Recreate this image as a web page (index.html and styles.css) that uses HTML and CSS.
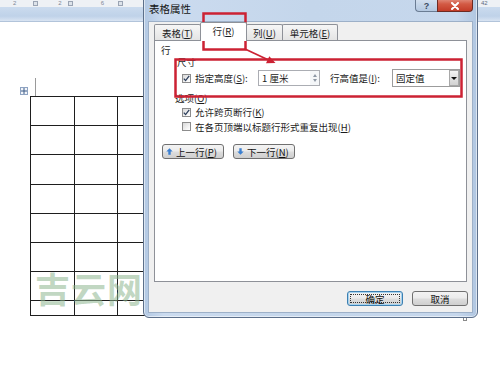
FILE: index.html
```html
<!DOCTYPE html>
<html lang="zh-CN">
<head>
<meta charset="utf-8">
<title>表格属性</title>
<link rel="stylesheet" href="styles.css">
</head>
<body>
<div class="screen">
  <div class="ruler">
    <div class="ruler-nums">
      <span class="rn n1">2</span><span class="rm m1"></span><span class="rn n2">2</span><span class="rm m2"></span><span class="rn n3">6</span><span class="rm m3"></span><span class="rn n4">42</span>
    </div>
    <div class="ruler-band"></div>
  </div>

  <div class="doc">
    <div class="table-wrap">
      <span class="margin-mark"></span>
      <span class="move-handle">
        <svg width="6" height="6" viewBox="0 0 6 6"><path d="M3 0V6M0 3H6" stroke="#3a5a86" stroke-width="1"/></svg>
      </span>
      <table class="grid">
        <tbody>
          <tr><td></td><td></td><td></td><td></td><td></td><td></td><td></td><td></td><td></td><td></td></tr>
          <tr><td></td><td></td><td></td><td></td><td></td><td></td><td></td><td></td><td></td><td></td></tr>
          <tr class="r30"><td></td><td></td><td></td><td></td><td></td><td></td><td></td><td></td><td></td><td></td></tr>
          <tr><td></td><td></td><td></td><td></td><td></td><td></td><td></td><td></td><td></td><td></td></tr>
          <tr><td></td><td></td><td></td><td></td><td></td><td></td><td></td><td></td><td></td><td></td></tr>
          <tr><td></td><td></td><td></td><td></td><td></td><td></td><td></td><td></td><td></td><td></td></tr>
          <tr><td></td><td></td><td></td><td></td><td></td><td></td><td></td><td></td><td></td><td></td></tr>
          <tr class="short"><td></td><td></td><td></td><td></td><td></td><td></td><td></td><td></td><td></td><td></td></tr>
        </tbody>
      </table>
      <span class="resize-handle"></span>
    </div>
  </div>

  <div class="watermark">吉云网</div>

  <div class="dialog">
    <div class="titlebar">
      <span class="title">表格属性</span>
      <div class="caption-btns">
        <span class="cap help">?</span>
        <span class="cap close">
          <svg width="10" height="8" viewBox="0 0 10 8"><path d="M2 1L8 7M8 1L2 7" stroke="#fff" stroke-width="2" stroke-linecap="round"/></svg>
        </span>
      </div>
    </div>
    <div class="dlg-body">
      <div class="tabs">
        <div class="tab t1">表格(<u>T</u>)</div>
        <div class="tab t2 active">行(<u>R</u>)</div>
        <div class="tab t3">列(<u>U</u>)</div>
        <div class="tab t4">单元格(<u>E</u>)</div>
      </div>
      <div class="panel">
        <div class="sec-title">行</div>
        <div class="grp-title">尺寸</div>
        <div class="size-row">
          <div class="chk-line">
            <span class="chk checked"><svg width="7" height="7" viewBox="0 0 7 7"><path d="M0.8 3.6L2.6 5.6L6.2 0.8" fill="none" stroke="#2c3e5c" stroke-width="1.3"/></svg></span>
            <span>指定高度(<u>S</u>):</span>
          </div>
          <div class="spin">
            <span class="val">1 厘米</span>
            <span class="spin-btns"><i class="up"></i><i class="down"></i></span>
          </div>
          <span class="lbl">行高值是(<u>I</u>):</span>
          <div class="combo">
            <span class="val">固定值</span>
            <span class="combo-btn"><i></i></span>
          </div>
        </div>
        <div class="opts-title">选项(<u>O</u>)</div>
        <div class="opt">
          <span class="chk checked"><svg width="7" height="7" viewBox="0 0 7 7"><path d="M0.8 3.6L2.6 5.6L6.2 0.8" fill="none" stroke="#2c3e5c" stroke-width="1.3"/></svg></span>
          <span>允许跨页断行(<u>K</u>)</span>
        </div>
        <div class="opt opt2">
          <span class="chk"></span>
          <span>在各页顶端以标题行形式重复出现(<u>H</u>)</span>
        </div>
        <div class="nav-btns">
          <button class="btn nbtn"><svg width="7" height="7" viewBox="0 0 7 7"><path d="M3.5 0.3L6.7 3.6H4.7V6.7H2.3V3.6H0.3Z" fill="#3b7fd0"/></svg><span>上一行(<u>P</u>)</span></button>
          <button class="btn nbtn"><svg width="7" height="7" viewBox="0 0 7 7"><path d="M3.5 6.7L6.7 3.4H4.7V0.3H2.3V3.4H0.3Z" fill="#3b7fd0"/></svg><span>下一行(<u>N</u>)</span></button>
        </div>
      </div>
      <div class="footer">
        <button class="btn fbtn default">确定</button>
        <button class="btn fbtn">取消</button>
      </div>
    </div>
  </div>

  <svg class="annot" width="500" height="371" viewBox="0 0 500 371">
    <rect x="203.5" y="13.5" width="42" height="36" fill="none" stroke="#cc2233" stroke-width="2.5"/>
    <path d="M245 49L268 59.7" stroke="#cc2233" stroke-width="1.8"/>
    <path d="M275.5 63L266 63.2L269.3 56.2Z" fill="#cc2233"/>
    <rect x="175.5" y="59.5" width="286" height="37" fill="none" stroke="#cc2233" stroke-width="2.5"/>
  </svg>
</div>
</body>
</html>
```

FILE: styles.css
```css
* {
  box-sizing: border-box;
  margin: 0;
  padding: 0;
}

html, body {
  width: 500px;
  height: 371px;
  overflow: hidden;
  background: #fff;
}

body {
  font-family: "Noto Sans CJK SC", "Liberation Sans", sans-serif;
  font-size: 9.5px;
  color: #1b1b1b;
}

u {
  text-decoration: underline;
  text-underline-offset: 1px;
}

.screen {
  position: relative;
  width: 500px;
  height: 371px;
  overflow: hidden;
}

/* ---------- ruler ---------- */
.ruler {
  height: 22px;
  display: flex;
  flex-direction: column;
}

.ruler-nums {
  height: 7px;
  background: #eef1f5;
  display: flex;
  align-items: center;
  font-family: "Liberation Sans", sans-serif;
  font-size: 6px;
  line-height: 7px;
  color: #7d8696;
}

.rn { display: block; }
.rm {
  display: block;
  width: 5px;
  height: 5px;
  border: 1px solid #9aa4b4;
  background: #dde3ea;
}
.n1 { margin-left: 13px; }
.m1 { margin-left: 17px; }
.n2 { margin-left: 20px; }
.m2 { margin-left: 6px; }
.n3 { margin-left: 28px; }
.m3 { margin-left: 14px; }
.n4 { margin-left: 358px; color: #5d6a80; }

.ruler-band {
  flex: 1;
  background: linear-gradient(#cbdbee, #bfd2e9 65%, #d9e4f2);
  border-bottom: 1px solid #b2c4da;
}

/* ---------- document ---------- */
.doc {
  padding: 74px 0 0 30px;
}

.table-wrap {
  position: relative;
  width: 436px;
}

.grid {
  border-collapse: collapse;
  table-layout: fixed;
  width: 436px;
}

.grid td {
  border: 1.5px solid #1e1e1e;
  height: 29px;
  padding: 0;
}

.grid tr.r30 td { height: 30px; }
.grid tr.short td { height: 15px; }

.move-handle {
  position: absolute;
  left: -10px;
  top: -9px;
  width: 8px;
  height: 8px;
  border: 1px solid #8ea3c2;
  background: #f2f5fa;
  display: flex;
  align-items: center;
  justify-content: center;
}

.margin-mark {
  position: absolute;
  left: 5px;
  top: -18px;
  width: 1px;
  height: 18px;
  background: #9a9a9a;
}

.resize-handle {
  position: absolute;
  right: -1px;
  bottom: -5px;
  width: 4px;
  height: 4px;
  border: 1px solid #8a8a8a;
  background: #fff;
}

.watermark {
  position: absolute;
  left: 35px;
  top: 266px;
  font-size: 35px;
  font-weight: 700;
  line-height: 44px;
  letter-spacing: 1px;
  color: rgba(140, 180, 142, 0.55);
}

/* ---------- dialog ---------- */
.dialog {
  position: absolute;
  left: 143px;
  top: -4px;
  width: 335px;
  height: 322px;
  border: 1px solid #5c6f8a;
  border-radius: 0 0 6px 6px;
  background: linear-gradient(90deg, #b2c8e3 0%, #cbdbef 6%, #c4d6eb 50%, #c6d7ec 94%, #b0c6e1 100%);
  padding: 0 5px 5px;
  display: flex;
  flex-direction: column;
  box-shadow: inset 0 0 0 1px rgba(255, 255, 255, 0.55);
}

.titlebar {
  height: 25px;
  display: flex;
  align-items: flex-start;
}

.title {
  margin-top: 5px;
  font-size: 10.5px;
  line-height: 14px;
  color: #141414;
}

.caption-btns {
  margin-left: auto;
  margin-right: -1px;
  display: flex;
}

.cap {
  height: 15px;
  display: flex;
  align-items: center;
  justify-content: center;
}

.help {
  width: 22px;
  border: 1px solid #6a7c93;
  border-top: none;
  border-right: none;
  border-radius: 0 0 0 4px;
  background: linear-gradient(#dbe5f1, #c6d6e9 50%, #b4c8e0);
  color: #3a4b60;
  font-family: "Liberation Sans", sans-serif;
  font-size: 9px;
  font-weight: 700;
  padding-top: 3px;
}

.close {
  width: 36px;
  border: 1px solid #6e2a22;
  border-top: none;
  border-radius: 0 0 4px 0;
  background: linear-gradient(#e8a395, #d35a44 50%, #c33c28);
  padding-top: 3px;
}

.dlg-body {
  flex: 1;
  background: #f0f0f0;
  padding: 2px 5px 0 5px;
  display: flex;
  flex-direction: column;
  box-shadow: 0 0 0 1px #9db0c8;
}

.tabs {
  height: 16px;
  display: flex;
  align-items: flex-end;
  position: relative;
  z-index: 1;
}

.tab {
  height: 16px;
  border: 1px solid #8e9198;
  border-bottom: none;
  border-radius: 2px 2px 0 0;
  background: linear-gradient(#f6f6f6, #e4e4e4);
  display: flex;
  align-items: center;
  justify-content: center;
  line-height: 14px;
  padding-top: 1px;
  white-space: nowrap;
}

.tab + .tab { margin-left: -1px; }

.t1 { width: 47px; }
.t2 { width: 47px; }
.t3 { width: 37px; }
.t4 { width: 56px; }

.tab.active {
  height: 19px;
  margin-bottom: -1px;
  background: #fff;
  padding-top: 0;
  padding-bottom: 3px;
}

.panel {
  height: 242px;
  border: 1px solid #8e9198;
  background: #fff;
  display: flex;
  flex-direction: column;
}

.sec-title {
  margin: 2px 0 0 6px;
  height: 14px;
  line-height: 14px;
}

.grp-title {
  margin-left: 22px;
  height: 10px;
  line-height: 10px;
}

.size-row {
  margin: 2px 0 0 27px;
  height: 18px;
  display: flex;
  align-items: center;
  white-space: nowrap;
}

.chk-line {
  width: 76px;
  display: flex;
  align-items: center;
}

.chk {
  flex: none;
  width: 9px;
  height: 9px;
  margin-right: 4px;
  border: 1px solid #8c8c8c;
  background: linear-gradient(135deg, #d8d8d8, #f6f6f6 70%, #fff);
  display: flex;
  align-items: center;
  justify-content: center;
}

.spin {
  width: 62px;
  height: 16px;
  border: 1px solid #abadb3;
  background: #fff;
  display: flex;
  align-items: center;
  padding-left: 3px;
}

.spin .val { flex: 1; line-height: 14px; }

.spin-btns {
  width: 9px;
  height: 14px;
  display: flex;
  flex-direction: column;
  align-items: center;
  justify-content: center;
  gap: 2px;
  background: #f4f6f8;
}

.spin-btns i {
  display: block;
  width: 0;
  height: 0;
  border-left: 2.5px solid transparent;
  border-right: 2.5px solid transparent;
}

.spin-btns .up { border-bottom: 3px solid #8d97a4; }
.spin-btns .down { border-top: 3px solid #8d97a4; }

.lbl {
  margin-left: 10px;
  width: 62px;
}

.combo {
  width: 68px;
  height: 18px;
  border: 1px solid #9c9c9c;
  background: #fff;
  display: flex;
  align-items: center;
  padding-left: 3px;
}

.combo .val { flex: 1; line-height: 14px; }

.combo-btn {
  width: 10px;
  height: 16px;
  border: 1px solid #a8a8a8;
  background: linear-gradient(#f5f5f5, #e2e2e2 50%, #d2d2d2);
  display: flex;
  align-items: center;
  justify-content: center;
}

.combo-btn i {
  display: block;
  width: 0;
  height: 0;
  border-left: 3px solid transparent;
  border-right: 3px solid transparent;
  border-top: 3px solid #111;
}

.opts-title {
  margin: 4px 0 0 20px;
  height: 14px;
  line-height: 14px;
}

.opt {
  margin-left: 27px;
  height: 14px;
  display: flex;
  align-items: center;
  white-space: nowrap;
}

.opt2 { height: 15px; }

.nav-btns {
  margin: 10px 0 0 7px;
  display: flex;
  gap: 9px;
}

.btn {
  border: 1px solid #707070;
  border-radius: 3px;
  background: linear-gradient(#f3f3f3 0%, #ebebeb 48%, #dddddd 52%, #cfcfcf 100%);
  font: inherit;
  color: #111;
  display: flex;
  align-items: center;
  justify-content: center;
  line-height: 12px;
  white-space: nowrap;
}

.nbtn {
  width: 62px;
  height: 15px;
  gap: 3px;
  justify-content: flex-start;
  padding-left: 3px;
}

.footer {
  margin-top: 9px;
  margin-right: -1px;
  display: flex;
  justify-content: flex-end;
  gap: 9px;
}

.fbtn {
  width: 56px;
  height: 15px;
}

.fbtn.default {
  border-color: #3c7fb1;
  box-shadow: inset 0 0 0 1px #a6d3ef;
  position: relative;
}

.fbtn.default::after {
  content: "";
  position: absolute;
  inset: 2px;
  border: 1px dotted #333;
}

.annot {
  position: absolute;
  left: 0;
  top: 0;
  pointer-events: none;
}
```
